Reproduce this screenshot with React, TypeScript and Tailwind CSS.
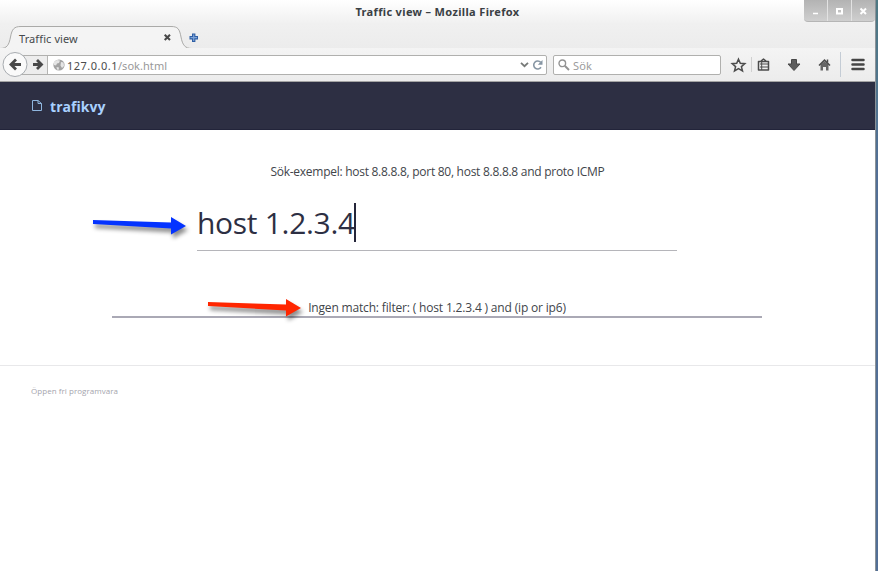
import React from "react";

function TabStrip() {
  return (
    <div className="relative h-12 bg-linear-to-b from-white via-[#f0f0f0] via-50% to-[#ececec]">
      <h1 className="pt-[3px] text-center text-[11px] leading-[18px] font-bold tracking-[0.35px] text-[#3a4044]">
        Traffic view – Mozilla Firefox
      </h1>
      <svg className="absolute top-[24px] left-0" width="875" height="25" viewBox="0 0 875 25" fill="none">
        <path d="M0 24.5C7 24.5 9 21 10.500 13C12 5 14 2.500 21 2.500H171C178 2.500 179.500 5 181 13C182.500 21 185 24.500 192 24.500V25H0Z" fill="#f4f4f4" />
        <path d="M0 24.500C7 24.500 9 21 10.500 13C12 5 14 2.500 21 2.500H171C178 2.500 179.500 5 181 13C182.500 21 185 24.500 192 24.500H875" stroke="#aaaaa8" />
        <path d="M164.700 10.700L170 16M170 10.700L164.700 16" stroke="#484848" strokeWidth="2" />
        <path d="M193.700 9.500V18M189.500 13.700H198" stroke="#2f5fa5" strokeWidth="3.400" />
        <path d="M193.700 10.500V17M190.500 13.700H197" stroke="#7da3d8" strokeWidth="1.200" />
      </svg>
      <span className="absolute top-[30px] left-[19px] text-[11px] leading-[18px] tracking-[0.1px] text-[#45494c]">Traffic view</span>
      <div className="absolute top-0 right-0 flex h-[22px] w-[71px] overflow-hidden rounded-b-[4px] border-b border-[#b5b5b5] bg-linear-to-b from-[#b3b3b3] to-[#cfcfcf]">
        <svg width="71" height="22" viewBox="0 0 71 22" fill="none" stroke="#fff">
          <path d="M23.500 0V22M47.500 0V22" stroke="#e2e2e2" />
          <path d="M9 13.500H14" strokeWidth="1.500" />
          <path d="M33 9H38V13.500H33Z" strokeWidth="2" />
          <path d="M56.500 8.500L62 14M62 8.500L56.500 14" strokeWidth="2" />
        </svg>
      </div>
    </div>
  );
}

function Toolbar() {
  return (
    <div className="relative flex h-[34px] items-start border-b border-[#a4a4a4] bg-linear-to-b from-[#f4f4f4] to-[#ececec] pt-[7px] pl-[14px]">
      <div className="flex h-5 w-[533px] items-center rounded-[2px] border border-[#b0b0ae] bg-white">
        <div className="h-full w-[33px] border-r border-[#b5b5b3] bg-[#ededed]" />
        <svg className="ml-[5px]" width="12" height="12" viewBox="0 0 12 12">
          <circle cx="6" cy="6" r="5.600" fill="#a3a3a3" />
          <path d="M1 3L4 1L7 1.500L6 4L4 4.500L3 6.500L1 6ZM8 3L10.500 3.500L11 7L9 9L7.500 6.500ZM3.500 8L6 8.500L5.500 11L4 10.500Z" fill="#e5e5e5" />
        </svg>
        <p className="mt-[2px] ml-[2px] text-[11px] leading-[18px] tracking-[0.48px] whitespace-nowrap text-[#4b4b4b]">
          127.0.0.1<span className="tracking-[0.05px] text-[#999]">/sok.html</span>
        </p>
        <svg className="mr-[2px] ml-auto" width="25" height="14" viewBox="0 0 25 14" fill="none">
          <path d="M2 4.800L5.500 8.200L9 4.800" stroke="#777a78" strokeWidth="1.800" />
          <path d="M21.700 4.300A4 4 0 1 0 22 9.300" stroke="#8695a3" strokeWidth="1.600" />
          <path d="M23.500 2V6.700H18.800Z" fill="#8695a3" />
        </svg>
      </div>
      <div className="ml-[6px] flex h-5 w-[168px] items-center rounded-[2px] border border-[#b0b0ae] bg-white">
        <svg className="ml-[4px]" width="12" height="12" viewBox="0 0 12 12" fill="none" stroke="#929292">
          <circle cx="4.300" cy="4.300" r="3.300" strokeWidth="1.400" />
          <path d="M7 7L11 11" strokeWidth="2" />
        </svg>
        <span className="mt-[2px] ml-[3px] text-[11px] leading-[18px] tracking-[0.1px] text-[#9b9b9b]">Sök</span>
      </div>
      <svg className="absolute top-[3px] left-0" width="50" height="27" viewBox="0 0 50 27" fill="none">
        <circle cx="15" cy="13.500" r="12" fill="#fafafa" stroke="#a8acb0" />
        <path d="M21 13.500H11.500M16 8.500L11 13.500L16 18.500" stroke="#494949" strokeWidth="2.800" />
        <path d="M33 13.500H40.500M37 9L41.500 13.500L37 18" stroke="#494949" strokeWidth="2.800" />
      </svg>
      <svg className="absolute top-[3px] left-[725px]" width="150" height="27" viewBox="0 0 150 27" fill="none">
        <path d="M13.500 8.200L15.300 12.300L19.800 12.700L16.400 15.600L17.500 19.900L13.500 17.600L9.500 19.900L10.600 15.600L7.200 12.700L11.700 12.300Z" stroke="#4c4c4c" strokeWidth="1.500" />
        <path d="M26.500 6V21" stroke="#d0d0d0" />
        <path d="M33.500 10.500H43.500V19H33.500ZM36 10L38.500 8L41 10" stroke="#4c4c4c" strokeWidth="1.500" strokeLinejoin="round" />
        <path d="M35 13H43M35 16H43M36.700 11V19" stroke="#4c4c4c" />
        <path d="M66.500 8.500H71.500V13H75L69 19.500L63 13H66.500Z" fill="#5d5d5d" stroke="#484848" />
        <path d="M95.500 13.500V19.500H98V16H101V19.500H103.500V13.500L99.500 10.500Z" fill="#666" />
        <path d="M94 14.500L99.500 9.200L105 14.500" stroke="#4c4c4c" strokeWidth="1.600" />
        <path d="M102.500 8.500V11.500" stroke="#4c4c4c" strokeWidth="1.500" />
        <path d="M115.500 1V26" stroke="#c4ccd5" />
        <path d="M127.500 9H138.500M127.500 13.500H138.500M127.500 18H138.500" stroke="#454545" strokeWidth="2.500" strokeLinecap="round" />
      </svg>
    </div>
  );
}

function Pointer({ className, color }: { className: string; color: string }) {
  return (
    <svg className={className} width="100" height="26" viewBox="0 0 100 26">
      <path transform="translate(0 14)" d="M0 -6L78 -3.500V-9L93 0L78 8.500V2.500L0 -2Z" fill={color} />
    </svg>
  );
}

export default function App() {
  return (
    <div className="flex h-[571px] w-[878px] overflow-hidden bg-white font-['Noto_Sans',sans-serif]">
      <div className="flex w-[875px] shrink-0 flex-col">
        <TabStrip />
        <Toolbar />
        <header className="flex h-[48px] items-center border-b border-[#22243a] bg-[#2d2f43] pl-8 font-['Open_Sans',sans-serif]">
          <svg width="10" height="11" viewBox="0 0 10 11" fill="none" stroke="#8fb6df">
            <path d="M0.500 0.500H6L9.500 3.500V10.500H0.500ZM6 0.500V3.500H9.500" />
          </svg>
          <span className="mt-[3px] ml-[8px] text-[14px] leading-5 font-bold tracking-[0.05px] text-[#a9d1ff]">trafikvy</span>
        </header>
        <main className="relative h-[236px] border-b border-[#e8e8ea] font-['Open_Sans',sans-serif] text-[#41454a]">
          <p className="pt-[33px] text-center text-[12px] leading-[18px] tracking-[-0.27px]">Sök-exempel: host 8.8.8.8, port 80, host 8.8.8.8 and proto ICMP</p>
          <div className="mt-[20px] ml-[197px] flex h-[50px] w-[480px] items-start border-b border-[#b5b5ba]">
            <span className="w-[157px] text-[30px] leading-[44px] tracking-[-0.3px] whitespace-nowrap text-[#2d2f43]">host 1.2.3.4</span>
            <span className="mt-[2px] h-[39px] w-[2px] bg-[#25263a]" />
          </div>
          <div className="mt-[47px] ml-[112px] h-[20px] w-[650px] border-b-2 border-[#aaa9b5] text-center text-[12px] leading-[20px] tracking-[-0.17px]">
            Ingen match: filter: ( host 1.2.3.4 ) and (ip or ip6)
          </div>
          <Pointer className="absolute top-[82px] left-[93px] drop-shadow-[2px_4px_2px_rgba(0,0,0,0.45)]" color="#0433ff" />
          <Pointer className="absolute top-[164px] left-[208px] drop-shadow-[2px_4px_2px_rgba(0,0,0,0.45)]" color="#ff2600" />
        </main>
        <footer className="pt-[19px] pl-[31px] font-['Open_Sans',sans-serif] text-[8px] leading-[12px] tracking-[0.04px] text-[#a5a5ad]">Öppen fri programvara</footer>
      </div>
      <div className="w-[3px] border-l border-[#8b9297] bg-linear-to-b from-[#4e7983] to-[#526f96] to-30%" />
    </div>
  );
}
